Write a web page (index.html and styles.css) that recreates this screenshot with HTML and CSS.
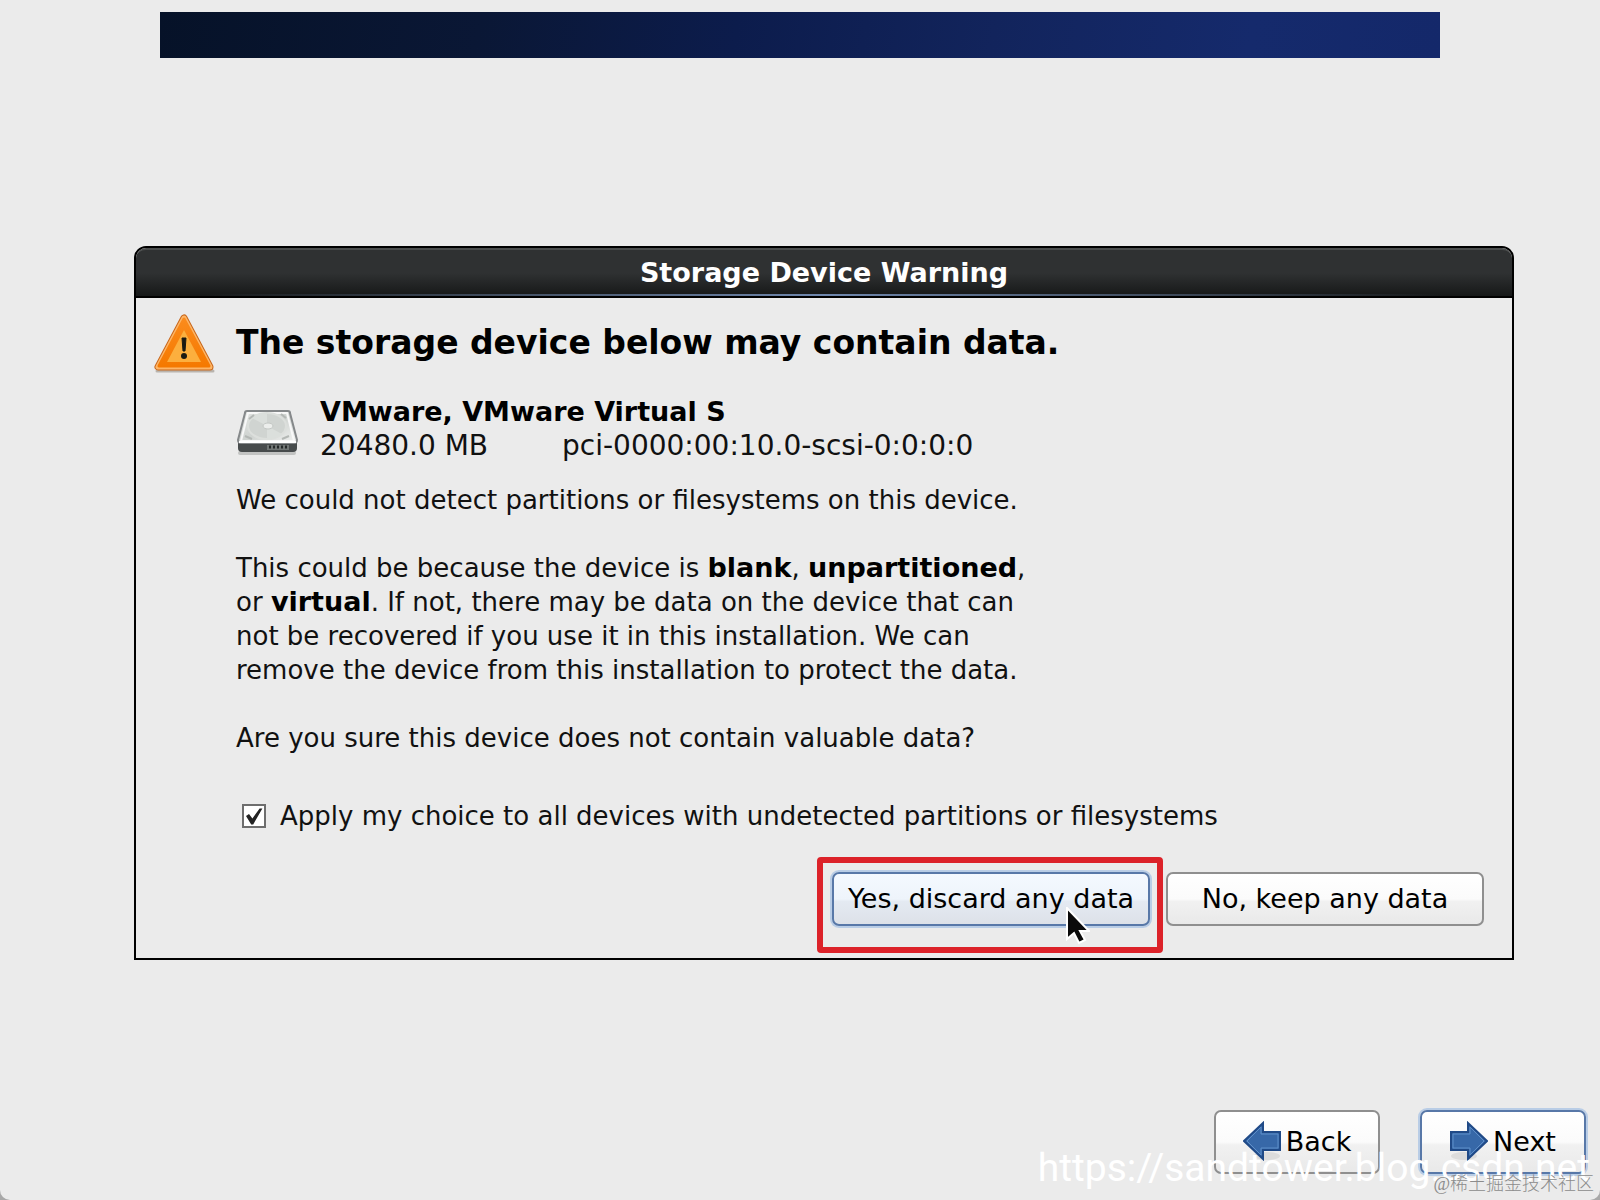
FILE: index.html
```html
<!DOCTYPE html>
<html lang="en">
<head>
    <meta charset="UTF-8">
    <meta name="viewport" content="width=device-width, initial-scale=1.0">
    <title>Storage Device Warning</title>
    <link rel="stylesheet" href="styles.css">
</head>
<body>
    <header class="banner"></header>

    <main class="dialog">
        <h1 class="titlebar">Storage Device Warning</h1>
        <div class="content">
            <div class="heading">
                <svg class="warning-icon" viewBox="0 0 62 62" aria-hidden="true">
                    <defs>
                        <linearGradient id="warn" x1="0" y1="0" x2="0" y2="1">
                            <stop offset="0" stop-color="#fb8b1c"/>
                            <stop offset="1" stop-color="#f57900"/>
                        </linearGradient>
                    </defs>
                    <path d="M3 59h56" stroke="#b9b4ae" stroke-width="3" stroke-linecap="round"/>
                    <path d="M30 6 4 55h52z" fill="#c8661a" stroke="#c8661a" stroke-width="7" stroke-linejoin="round"/>
                    <path d="M30 6 4 55h52z" fill="#fdb566" stroke="#fdb566" stroke-width="5" stroke-linejoin="round"/>
                    <path d="M30 7 5 54h50z" fill="url(#warn)" stroke="url(#warn)" stroke-width="3" stroke-linejoin="round"/>
                    <path d="M30 18 13 50h34z" fill="#fcaf3e"/>
                    <path d="M28 26h4l-1 13h-2z" fill="#1c1a12" stroke="#1c1a12"/>
                    <circle cx="30" cy="44" r="3" fill="#1c1a12"/>
                </svg>
                <h2>The storage device below may contain data.</h2>
            </div>
            <div class="details">
                <div class="device">
                    <svg class="drive-icon" viewBox="0 0 62 48" aria-hidden="true">
                        <defs>
                            <linearGradient id="lid" x1="0" y1="0" x2="1" y2="1">
                                <stop offset="0" stop-color="#e4e6e4"/>
                                <stop offset=".5" stop-color="#cfd3d0"/>
                                <stop offset="1" stop-color="#f1f2f1"/>
                            </linearGradient>
                        </defs>
                        <path d="M4 44h54" stroke="#c2c3c2" stroke-width="4" stroke-linecap="round"/>
                        <path d="M2 33h59v6q0 4-4 4H6q-4 0-4-4z" fill="#474b4c"/>
                        <path d="M11 2h41q2 0 2 2l7 27q0 3-3 3H5q-3 0-3-3L9 4q0-2 2-2z" fill="url(#lid)" stroke="#85888a" stroke-width="2"/>
                        <path d="M12 4h39l7 28H5z" fill="none" stroke="#f8f8f8" stroke-width="2"/>
                        <ellipse cx="31" cy="17" rx="19" ry="13" fill="#d0d4d1" stroke="#dcdfdc" stroke-width="2"/>
                        <path d="M31 17 16 9q7-5 15-5zM31 17l15 8q-6 5-15 5z" fill="#dbdfdc"/>
                        <ellipse cx="32" cy="17" rx="5" ry="3" fill="#eceeec" stroke="#c4c8c5"/>
                        <path d="m13 10 5-4M45 5l5 4M9 27l7 3M46 30l7-3" stroke="#b4b8b5" stroke-width="2"/>
                        <path d="M3 33h57" stroke="#fff" stroke-width="2"/>
                        <path d="M31 36h22v5H31z" fill="#707574"/>
                        <path d="M33 38h19" stroke="#242828" stroke-width="3" stroke-dasharray="2 2"/>
                    </svg>
                    <div>
                        <strong>VMware, VMware Virtual S</strong>
                        <div class="device-info">
                            <span>20480.0 MB</span>
                            <span>pci-0000:00:10.0-scsi-0:0:0:0</span>
                        </div>
                    </div>
                </div>
                <p>We could not detect partitions or filesystems on this device.</p>
                <p>This could be because the device is <b>blank</b>, <b>unpartitioned</b>,<br>
                or <b>virtual</b>. If not, there may be data on the device that can<br>
                not be recovered if you use it in this installation. We can<br>
                remove the device from this installation to protect the data.</p>
                <p>Are you sure this device does not contain valuable data?</p>
                <label class="check" for="apply-all">
                    <input type="checkbox" id="apply-all" checked>
                    Apply my choice to all devices with undetected partitions or filesystems
                </label>
            </div>
        </div>
        <div class="actions">
            <div class="highlight">
                <button type="button" class="button focused yes">Yes, discard any data</button>
                <svg class="cursor" viewBox="0 0 24 38" aria-hidden="true">
                    <path d="M1 1v31l7-6 5 10 6-3-5-9h9z" fill="#0a0a0a" stroke="#fff" stroke-width="2"/>
                </svg>
            </div>
            <button type="button" class="button">No, keep any data</button>
        </div>
    </main>

    <footer class="nav">
        <button type="button" class="button">
            <svg class="arrow" viewBox="0 0 38 40" aria-hidden="true">
                <ellipse cx="24" cy="35" rx="13" ry="4" fill="#dcdcdc"/>
                <path d="M1 20 20 2v9h17v18H20v9z" fill="#3768a8" stroke="#204a87" stroke-width="2"/>
                <path d="M4 20 18 6v7h17v14H18v7z" fill="none" stroke="#5f8fc9"/>
            </svg>
            Back
        </button>
        <button type="button" class="button focused">
            <svg class="arrow" viewBox="0 0 38 40" aria-hidden="true">
                <ellipse cx="14" cy="35" rx="13" ry="4" fill="#dcdcdc"/>
                <path d="M37 20 18 2v9H1v18h17v9z" fill="#3768a8" stroke="#204a87" stroke-width="2"/>
                <path d="M34 20 20 6v7H3v14h17v7z" fill="none" stroke="#5f8fc9"/>
            </svg>
            Next
        </button>
    </footer>

    <div class="watermark">https://sandtower.blog.csdn.net</div>
    <div class="community">@稀土掘金技术社区</div>
</body>
</html>
```
FILE: styles.css
```css
* {
    box-sizing: border-box;
}
html {
    background-color: #a8a8a8;
}
body {
    position: relative;
    display: flex;
    flex-direction: column;
    min-height: 100vh;
    margin: 0;
    border-radius: 0 0 10px 10px;
    background-color: #ebebeb;
    color: #111;
    font-family: "DejaVu Sans", sans-serif;
    font-size: 26px;
    line-height: 34px;
}
h1, h2, p {
    margin: 0;
}
.banner {
    height: 46px;
    margin: 12px 160px 0;
    background: linear-gradient(100deg, #061228 0%, #0a1735 25%, #0c1c4c 45%, #12245c 65%, #152a6c 85%, #14286a 100%);
}
.dialog {
    margin: 188px 86px 0 134px;
    border: 2px solid #000;
    border-radius: 12px 12px 0 0;
}
.titlebar {
    height: 50px;
    padding-top: 6px;
    border-top: 2px solid #4b4d4d;
    border-bottom: 2px solid #000;
    border-radius: 10px 10px 0 0;
    background:
        linear-gradient(90deg, transparent 5%, #7088ae 50%, transparent 95%) bottom / 100% 2px no-repeat,
        linear-gradient(#2f3132 50%, #161818);
    color: #fff;
    font-size: 27px;
    text-align: center;
}
.content {
    padding: 14px 18px 0;
}
.heading {
    display: flex;
    align-items: center;
    gap: 20px;
}
.heading h2 {
    color: #000;
    font-size: 33px;
}
.warning-icon {
    flex: none;
    width: 62px;
    height: 62px;
}
.details {
    margin: 21px 0 0 82px;
}
.device {
    display: flex;
    align-items: flex-end;
    gap: 22px;
    margin-bottom: 20px;
}
.device strong {
    color: #000;
    font-size: 27px;
}
.drive-icon {
    width: 62px;
    height: 54px;
    padding-bottom: 6px;
}
.device-info {
    display: flex;
    gap: 74px;
    font-size: 28px;
}
.details p {
    margin-bottom: 34px;
}
.details b {
    color: #000;
    font-size: 27px;
}
.check {
    display: flex;
    align-items: center;
    gap: 14px;
    margin: 44px 0 0 6px;
}
.check input {
    appearance: none;
    width: 24px;
    height: 24px;
    margin: 0;
    border: 2px solid #6e6e6e;
    background: #fff;
}
.check input:checked::before {
    content: "";
    display: block;
    width: 20px;
    height: 20px;
    background: #222;
    clip-path: polygon(10% 50%, 25% 40%, 42% 62%, 78% 12%, 92% 12%, 46% 92%, 36% 92%);
}
.actions {
    display: flex;
    justify-content: flex-end;
    gap: 16px;
    padding: 39px 28px 32px;
}
.button {
    display: flex;
    align-items: center;
    justify-content: center;
    width: 318px;
    height: 54px;
    padding: 0 0 2px;
    border: 2px solid #8f8f8f;
    border-radius: 7px;
    background: linear-gradient(#fff, #fbfbfb 50%, #f1f1f1 55%, #e9e9e9);
    color: #000;
    font-family: inherit;
    font-size: 27px;
}
.focused {
    border-color: #5878a8;
    box-shadow: 0 0 0 2px #b9cde6;
}
.yes {
    background: linear-gradient(#f4f9ff, #eef4fb 50%, #e4eaf2 55%, #dde1e8);
}
/* red callout drawn round the confirm button */
.highlight {
    position: relative;
}
.highlight::after {
    content: "";
    position: absolute;
    inset: -15px -13px -27px -15px;
    border: 6px solid #dc2229;
    border-radius: 4px;
    pointer-events: none;
}
.cursor {
    position: absolute;
    top: 35px;
    left: 234px;
    width: 24px;
    height: 38px;
}
.nav {
    display: flex;
    justify-content: flex-end;
    gap: 40px;
    margin-top: auto;
    padding: 0 14px 26px;
}
.nav .button {
    gap: 5px;
    width: 166px;
    height: 64px;
}
.arrow {
    width: 38px;
    height: 40px;
}
.watermark {
    position: absolute;
    right: 10px;
    bottom: 10px;
    color: #fff;
    font-family: Roboto, sans-serif;
    font-size: 39px;
    line-height: 44px;
}
.community {
    position: absolute;
    right: 6px;
    bottom: 4px;
    color: #8c8c8c;
    font-family: "Liberation Serif", "Noto Sans CJK SC", sans-serif;
    font-size: 18px;
    font-weight: 300;
    line-height: 24px;
}
```
